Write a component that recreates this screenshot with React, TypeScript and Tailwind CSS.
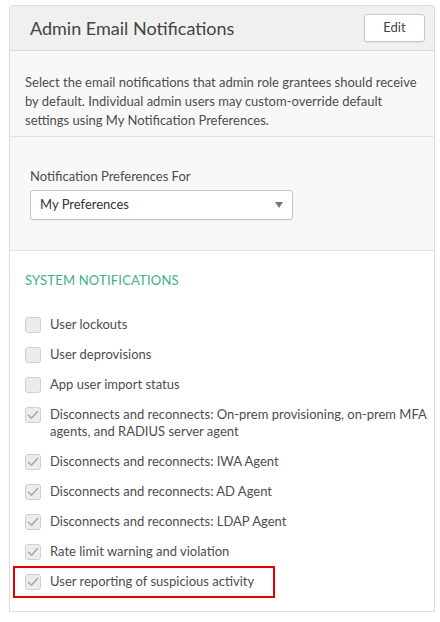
const items: { label: string; checked: boolean }[] = [
  { label: "User lockouts", checked: false },
  { label: "User deprovisions", checked: false },
  { label: "App user import status", checked: false },
  {
    label: "Disconnects and reconnects: On-prem provisioning, on-prem MFA agents, and RADIUS server agent",
    checked: true,
  },
  { label: "Disconnects and reconnects: IWA Agent", checked: true },
  { label: "Disconnects and reconnects: AD Agent", checked: true },
  { label: "Disconnects and reconnects: LDAP Agent", checked: true },
  { label: "Rate limit warning and violation", checked: true },
];

function Box({ checked }: { checked: boolean }) {
  return (
    <span className="mt-[1px] flex h-4 w-4 shrink-0 items-center justify-center rounded-[3px] border border-[#cfcfcf] bg-[#ececec]">
      {checked && (
        <svg width="12" height="10" viewBox="0 0 12 10" fill="none">
          <path d="M1.5 5.2 L4.5 8.2 L10.5 1.5" stroke="#a9a9a9" strokeWidth="1.6" strokeLinecap="round" strokeLinejoin="round" />
        </svg>
      )}
    </span>
  );
}

export default function App() {
  return (
    <div className="h-[622px] w-[440px] bg-white pt-[5px] pl-[9px] font-['Lato',sans-serif] text-[#4d4d4d]">
      <div className="w-[426px] rounded-t-[4px] border border-b-0 border-[#dcdcdc]">
        {/* Header */}
        <div className="flex h-[45px] items-center justify-between rounded-t-[4px] border-b border-[#dcdcdc] bg-[#f0f0f0] pl-[20px] pr-[9px]">
          <h2 className="text-[18px] text-[#444]">Admin Email Notifications</h2>
          <button className="h-[28px] w-[61px] rounded-[3px] border border-[#c8c8c8] bg-white text-[13px] text-[#444] shadow-[0_1px_1px_rgba(0,0,0,0.06)]">
            Edit
          </button>
        </div>

        {/* Description */}
        <div className="border-b border-[#e2e2e2] bg-[#f8f8f8] px-[15px] pt-[22px] pb-[6px] text-[13px] leading-[19px]">
          Select the email notifications that admin role grantees should receive by default. Individual admin users may custom-override default settings using My Notification Preferences.
        </div>

        {/* Preferences select */}
        <div className="border-b border-[#e2e2e2] bg-[#f8f8f8] px-[20px] pt-[30px] pb-[30px]">
          <div className="text-[13px] leading-[18px]">Notification Preferences For</div>
          <div className="mt-[5px] flex h-[30px] w-[263px] items-center justify-between rounded-[3px] border border-[#c6c6c6] bg-white px-[9px] shadow-[0_1px_1px_rgba(0,0,0,0.05)]">
            <span className="text-[13px] text-[#333]">My Preferences</span>
            <svg width="8" height="6" viewBox="0 0 8 6">
              <path d="M0 0 H8 L4 6 Z" fill="#777" />
            </svg>
          </div>
        </div>

        {/* System notifications */}
        <div className="pl-[15px] pr-[5px] pt-[20px] pb-[21px]">
          <div className="text-[13px] leading-[18px] tracking-[0.2px] text-[#3fb08a]">SYSTEM NOTIFICATIONS</div>
          <ul className="mt-[27px] space-y-[13px]">
            {items.map((it) => (
              <li key={it.label} className="flex gap-[9px] text-[13px] leading-[17px]">
                <Box checked={it.checked} />
                <span>{it.label}</span>
              </li>
            ))}
            <li className="relative flex gap-[9px] text-[13px] leading-[17px]">
              <span className="absolute -top-[7px] -left-[12px] h-[32px] w-[262px] border-2 border-[#e00000]" />
              <Box checked />
              <span>User reporting of suspicious activity</span>
            </li>
          </ul>
        </div>
        <div className="border-b border-[#e2e2e2]" />
      </div>
    </div>
  );
}
